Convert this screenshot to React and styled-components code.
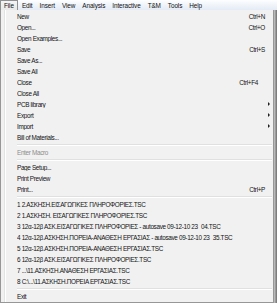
import React from 'react';
import styled, { createGlobalStyle } from 'styled-components';

const Global = createGlobalStyle`
  html, body { margin: 0; padding: 0; }
  body {
    width: 277px;
    height: 303px;
    overflow: hidden;
    background: #f0f0f0;
    font-family: "Liberation Sans", Arial, sans-serif;
    font-size: 6.4px;
    letter-spacing: -0.35px;
    color: #111;
  }
`;

const Page = styled.div`
  display: flex;
  flex-direction: column;
  width: 277px;
  height: 303px;
`;

const MenuBar = styled.div`
  display: flex;
  align-items: stretch;
  height: 10px;
  background: linear-gradient(#fdfeff, #e4ebf5);
  letter-spacing: -0.1px;
`;

const BarItem = styled.div`
  display: flex;
  align-items: center;
  padding: 0 3.5px;
  box-sizing: border-box;
  ${p => p.$active && `
    border: 1px solid #8f9091;
    border-bottom: 0;
    background: linear-gradient(#f4f4f4, #e9e9e9);
    padding: 0 3px;
    margin-right: 0.5px;
  `}
`;

const Body = styled.div`
  display: flex;
  flex: 1;
`;

const Dropdown = styled.div`
  width: 274px;
  box-sizing: border-box;
  border: 1px solid #979797;
  border-top: 0;
  background:
    linear-gradient(90deg, transparent 3px, #e2e3e3 3px, #e2e3e3 4px, #ffffff 4px, #ffffff 5px, transparent 5px),
    #f1f1f1;
  padding-top: 0.5px;
  display: flex;
  flex-direction: column;
`;

const Shadow = styled.div`
  flex: 1;
  background: linear-gradient(90deg, #c9c9c9, #6e6e6e);
`;

const Row = styled.div`
  display: grid;
  grid-template-columns: 1fr auto 8px;
  align-items: center;
  height: 11px;
  padding-left: 16px;
  white-space: nowrap;
  color: ${p => (p.$disabled ? '#8d8d8d' : '#141414')};
`;

const Label = styled.span`
  overflow: hidden;
`;

const Shortcut = styled.span`
  text-align: right;
  padding-right: ${p => p.$shift || 0}px;
`;

const Arrow = styled.span`
  justify-self: center;
  width: 0;
  height: 0;
  border-top: 2px solid transparent;
  border-bottom: 2px solid transparent;
  border-left: 2.5px solid #222;
`;

const Separator = styled.div`
  height: 4px;
  margin-left: 16px;
  margin-right: 1px;
  display: flex;
  flex-direction: column;
  justify-content: center;
  &::before {
    content: '';
    display: block;
    height: 1px;
    background: #e0e0e0;
  }
  &::after {
    content: '';
    display: block;
    height: 1px;
    background: #ffffff;
  }
`;

const barItems = ['File', 'Edit', 'Insert', 'View', 'Analysis', 'Interactive', 'T&M', 'Tools', 'Help'];

const items = [
  { label: 'New', key: 'Ctrl+N' },
  { label: 'Open...', key: 'Ctrl+O' },
  { label: 'Open Examples...' },
  { label: 'Save', key: 'Ctrl+S' },
  { label: 'Save As...' },
  { label: 'Save All' },
  { label: 'Close', key: 'Ctrl+F4', shift: 7 },
  { label: 'Close All' },
  { label: 'PCB library', sub: true },
  { label: 'Export', sub: true },
  { label: 'Import', sub: true },
  { label: 'Bill of Materials...' },
  { sep: true },
  { label: 'Enter Macro', disabled: true },
  { sep: true },
  { label: 'Page Setup...' },
  { label: 'Print Preview' },
  { label: 'Print...', key: 'Ctrl+P' },
  { sep: true },
  { label: '1  2.ΑΣΚΗΣΗ.ΕΙΣΑΓΩΓΙΚΕΣ ΠΛΗΡΟΦΟΡΙΕΣ.TSC' },
  { label: '2  1.ΑΣΚΗΣΗ. ΕΙΣΑΓΩΓΙΚΕΣ ΠΛΗΡΟΦΟΡΙΕΣ.TSC' },
  { label: '3  12α-12β ΑΣΚ.ΕΙΣΑΓΩΓΙΚΕΣ ΠΛΗΡΟΦΟΡΙΕΣ - autosave 09-12-10 23_04.TSC' },
  { label: '4  12α-12β.ΑΣΚΗΣΗ.ΠΟΡΕΙΑ-ΑΝΑΘΕΣΗ ΕΡΓΑΣΙΑΣ - autosave 09-12-10 23_35.TSC' },
  { label: '5  12α-12β.ΑΣΚΗΣΗ.ΠΟΡΕΙΑ-ΑΝΑΘΕΣΗ ΕΡΓΑΣΙΑΣ.TSC' },
  { label: '6  12α-12β ΑΣΚ.ΕΙΣΑΓΩΓΙΚΕΣ ΠΛΗΡΟΦΟΡΙΕΣ.TSC' },
  { label: '7  ...\\11.ΑΣΚΗΣΗ.ΑΝΑΘΕΣΗ ΕΡΓΑΣΙΑΣ.TSC' },
  { label: '8  C:\\...\\11.ΑΣΚΗΣΗ.ΠΟΡΕΙΑ ΕΡΓΑΣΙΑΣ.TSC' },
  { sep: true },
  { label: 'Exit' },
];

export default function App() {
  return (
    <Page>
      <Global />
      <MenuBar>
        {barItems.map((name, i) => (
          <BarItem key={name} $active={i === 0}>{name}</BarItem>
        ))}
      </MenuBar>
      <Body>
        <Dropdown>
          {items.map((it, i) =>
            it.sep ? (
              <Separator key={i} />
            ) : (
              <Row key={i} $disabled={it.disabled}>
                <Label>{it.label}</Label>
                <Shortcut $shift={it.shift}>{it.key || ''}</Shortcut>
                {it.sub ? <Arrow /> : <span />}
              </Row>
            )
          )}
        </Dropdown>
        <Shadow />
      </Body>
    </Page>
  );
}
